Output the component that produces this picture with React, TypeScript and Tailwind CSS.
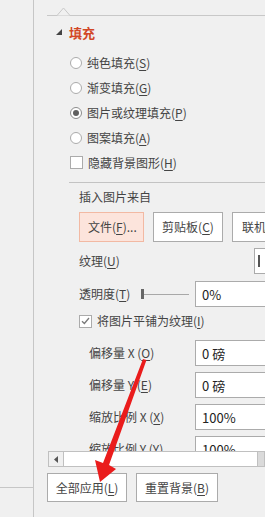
import React from 'react';

const Radio = ({ checked = false }: { checked?: boolean }) => (
  <span
    className={
      'flex h-[12px] w-[12px] shrink-0 items-center justify-center rounded-full border bg-white ' +
      (checked ? 'border-[#8c8c8c]' : 'border-[#ababab]')
    }
  >
    {checked && <span className="h-[6px] w-[6px] rounded-full bg-[#606060]" />}
  </span>
);

const Check = ({ checked = false }: { checked?: boolean }) => (
  <span className="flex h-[13px] w-[13px] shrink-0 items-center justify-center border border-[#ababab] bg-white">
    {checked && (
      <svg width="9" height="8" viewBox="0 0 9 8">
        <path d="M1 4.2 L3.4 6.5 L8 1" fill="none" stroke="#7a7a7a" strokeWidth="1.3" />
      </svg>
    )}
  </span>
);

const Key = ({ k }: { k: string }) => (
  <>
    (<u className="underline-offset-2">{k}</u>)
  </>
);

const Field = ({ value }: { value: string }) => (
  <div className="flex h-[26px] w-[110px] shrink-0 items-center border border-[#ababab] bg-white pl-[6px] text-[13px] text-[#222]">
    {value}
  </div>
);

const NumRow = ({ label, k, value }: { label: string; k: string; value: string }) => (
  <div className="flex h-[26px] items-center">
    <div className="w-[116px] shrink-0 pl-[10px]">
      {label} (<u className="underline-offset-2">{k}</u>)
    </div>
    <Field value={value} />
  </div>
);

export default function App() {
  return (
    <div className="relative flex h-[517px] w-[265px] overflow-hidden bg-[#f0f0f0] font-['Noto_Sans_CJK_SC','Noto_Sans',sans-serif] text-[12px] leading-none text-[#444]">
      {/* left strip */}
      <div className="w-[34px] shrink-0 border-r border-[#c6c6c6]">
        <div className="h-[488px] border-b border-[#c6c6c6]" />
      </div>

      <div className="flex min-w-0 flex-1 flex-col">
        {/* scrolling pane */}
        <div className="h-[451px] shrink-0 overflow-hidden">
          <div className="relative ml-[13px] mt-[15px] h-px bg-[#c8c8c8]">
            <svg className="absolute left-[10px] top-[-8px]" width="13" height="9" viewBox="0 0 13 9">
              <path d="M0 8.5 L6.5 1 L13 8.5" fill="#f0f0f0" stroke="#c8c8c8" />
            </svg>
          </div>

          <div className="mt-[6px] flex h-[20px] items-center pl-[22px]">
            <svg width="6" height="6" viewBox="0 0 6 6">
              <path d="M6 0 L6 6 L0 6 Z" fill="#444" />
            </svg>
            <span className="ml-[7px] text-[13px] font-bold text-[#d24726]">填充</span>
          </div>

          <div className="mt-[8px] flex flex-col pl-[36px]">
            <div className="flex h-[25px] items-center gap-[5px]">
              <Radio />
              <span>纯色填充<Key k="S" /></span>
            </div>
            <div className="flex h-[25px] items-center gap-[5px]">
              <Radio />
              <span>渐变填充<Key k="G" /></span>
            </div>
            <div className="flex h-[25px] items-center gap-[5px]">
              <Radio checked />
              <span>图片或纹理填充<Key k="P" /></span>
            </div>
            <div className="flex h-[25px] items-center gap-[5px]">
              <Radio />
              <span>图案填充<Key k="A" /></span>
            </div>
            <div className="flex h-[25px] items-center gap-[5px]">
              <Check />
              <span>隐藏背景图形<Key k="H" /></span>
            </div>
          </div>

          <div className="ml-[35px] mt-[7px] h-px bg-[#c3c3c3]" />

          <div className="pl-[45px]">
            <div className="mt-[4px] flex h-[20px] items-center">插入图片来自</div>

            <div className="mt-[5px] flex h-[30px] gap-[9px]">
              <div className="flex w-[65px] shrink-0 items-center border border-[#f2b9a3] bg-[#fce4dc] pl-[8px]">
                文件(<u className="underline-offset-2">F</u>)...
              </div>
              <div className="flex w-[70px] shrink-0 items-center justify-center border border-[#ababab] bg-white">
                剪贴板<Key k="C" />
              </div>
              <div className="flex w-[70px] shrink-0 items-center border border-[#ababab] bg-white pl-[9px]">
                联机(<u className="underline-offset-2">E</u>)...
              </div>
            </div>

            <div className="mt-[6px] flex h-[26px] items-center">
              <div className="w-[175px] shrink-0">
                纹理<Key k="U" />
              </div>
              <div className="flex h-[26px] w-[30px] shrink-0 items-center border border-[#ababab] bg-white pl-[3px]">
                <span className="h-[12px] w-[2px] bg-[#555]" />
              </div>
            </div>

            <div className="mt-[7px] flex h-[26px] items-center">
              <div className="w-[62px] shrink-0">
                透明度<Key k="T" />
              </div>
              <div className="flex w-[54px] shrink-0 items-center">
                <span className="h-[10px] w-[3px] bg-[#666]" />
                <span className="h-px w-[45px] bg-[#a8a8a8]" />
              </div>
              <Field value="0%" />
            </div>

            <div className="mt-[1px] flex h-[26px] items-center gap-[5px]">
              <Check checked />
              <span>将图片平铺为纹理<Key k="I" /></span>
            </div>

            <div className="mt-[6px] flex flex-col gap-[6px]">
              <NumRow label="偏移量 X" k="O" value="0 磅" />
              <NumRow label="偏移量 Y" k="E" value="0 磅" />
              <NumRow label="缩放比例 X" k="X" value="100%" />
              <NumRow label="缩放比例 Y" k="Y" value="100%" />
            </div>
          </div>
        </div>

        {/* horizontal scrollbar */}
        <div className="ml-[14px] flex h-[16px] shrink-0 border border-[#c0c0c0] bg-[#dadada]">
          <div className="flex w-[15px] shrink-0 items-center justify-center border-r border-[#c0c0c0] bg-[#f0f0f0]">
            <svg width="4" height="7" viewBox="0 0 4 7">
              <path d="M4 0 L0 3.5 L4 7 Z" fill="#555" />
            </svg>
          </div>
          <div className="w-[194px] shrink-0 border-r border-[#c0c0c0] bg-white" />
        </div>

        {/* bottom buttons */}
        <div className="ml-[13px] mt-[6px] flex h-[29px] gap-[9px]">
          <div className="flex w-[80px] items-center justify-center border border-[#ababab] bg-white">
            全部应用<Key k="L" />
          </div>
          <div className="flex w-[82px] items-center justify-center border border-[#ababab] bg-white">
            重置背景<Key k="B" />
          </div>
        </div>
      </div>

      {/* red annotation arrow */}
      <svg className="pointer-events-none absolute left-0 top-0" width="265" height="517" viewBox="0 0 265 517">
        <path d="M143 359 L146.5 360 L109 465 L116 469 L100 482 L95 460 L103 463 Z" fill="#ea1c1c" />
      </svg>
    </div>
  );
}
